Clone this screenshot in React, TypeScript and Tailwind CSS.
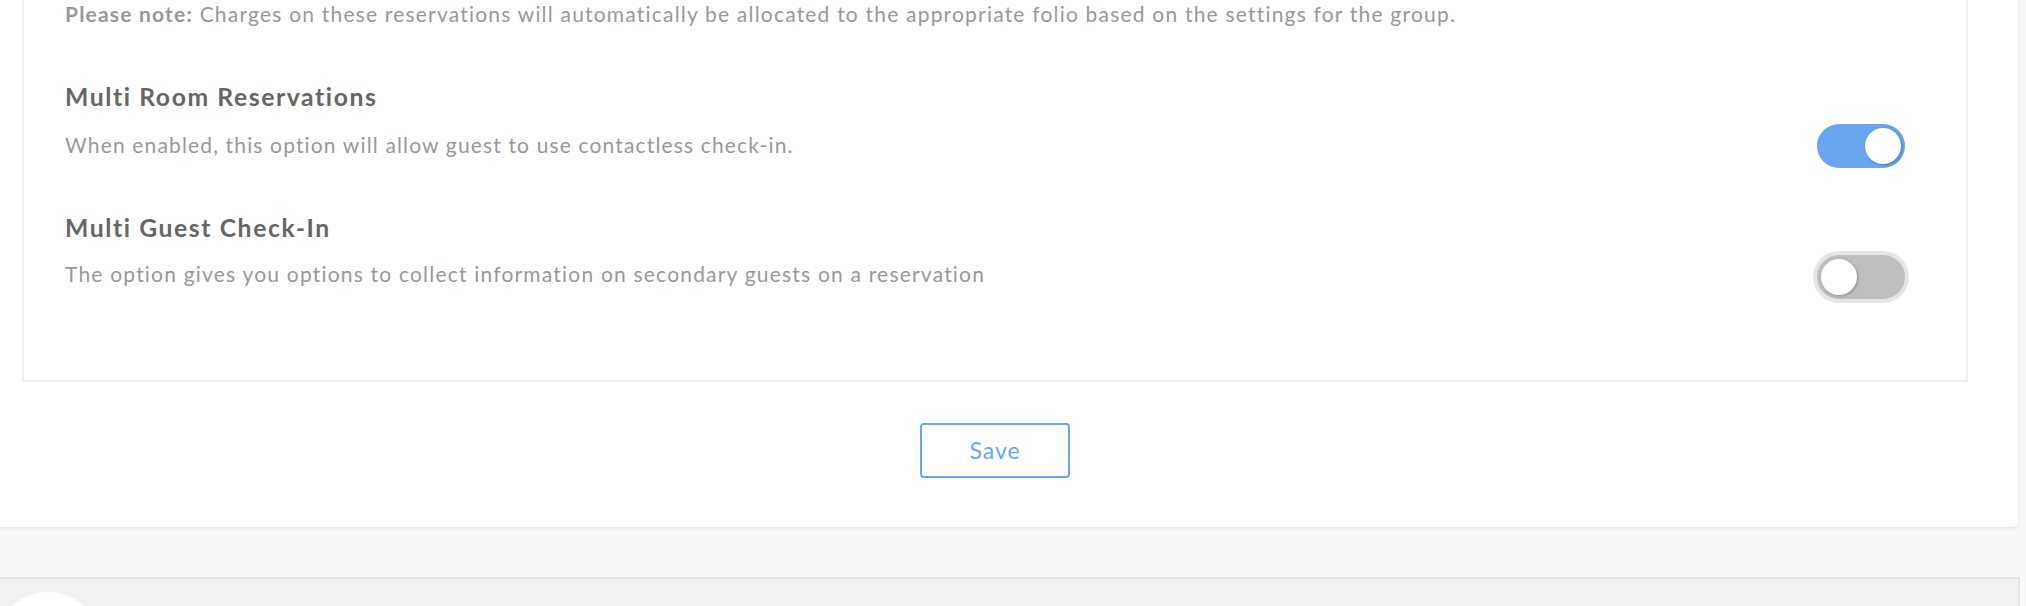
import React from "react";

function Toggle({ on }: { on: boolean }) {
  return (
    <div
      className={
        on
          ? "flex h-[44px] w-[88px] shrink-0 items-center justify-end rounded-full bg-[#68a6ef] px-[4px]"
          : "flex h-[44px] w-[88px] shrink-0 items-center justify-start rounded-full bg-[#bfbfbf] px-[4px] shadow-[0_0_0_4px_#e6e6e6]"
      }
    >
      <div className="h-[36px] w-[36px] rounded-full bg-white shadow-[1px_1px_3px_rgba(0,0,0,0.25)]" />
    </div>
  );
}

export default function App() {
  return (
    <div className="h-[606px] w-[2026px] overflow-hidden bg-[#f8f8f8] font-[Lato,sans-serif] [font-variant-ligatures:none]">
      <div className="w-[2018px] rounded-br-md bg-white pb-[49px] shadow-[0_2px_4px_rgba(0,0,0,0.07)]">
        <div className="ml-[22px] mr-[50px]">
          <div className="border-2 border-t-0 border-[#efefef] pb-[81px] pl-[41px] pr-[61px]">
            <p className="pt-[2px] text-[21px] leading-[24px] tracking-[1.2px] text-[#999999]">
              <span className="font-bold">Please note:</span> Charges on these reservations will automatically be allocated to the appropriate folio based on the settings for the group.
            </p>

            <div className="mt-[56px] flex items-start justify-between">
              <div>
                <h3 className="text-[24.7px] font-bold leading-[29px] tracking-[1.6px] text-[#666666]">Multi Room Reservations</h3>
                <p className="mt-[22px] text-[21px] leading-[24px] tracking-[1.15px] text-[#999999]">
                  When enabled, this option will allow guest to use contactless check-in.
                </p>
              </div>
              <div className="mt-[42px]">
                <Toggle on={true} />
              </div>
            </div>

            <div className="mt-[45px] flex items-start justify-between">
              <div>
                <h3 className="text-[24.7px] font-bold leading-[29px] tracking-[1.6px] text-[#666666]">Multi Guest Check-In</h3>
                <p className="mt-[20px] text-[21px] leading-[24px] tracking-[1.2px] text-[#999999]">
                  The option gives you options to collect information on secondary guests on a reservation
                </p>
              </div>
              <div className="mt-[42px]">
                <Toggle on={false} />
              </div>
            </div>
          </div>

          <div className="mt-[41px] flex justify-center">
            <button className="h-[55px] w-[150px] rounded-[4px] border-2 border-[#6aa7ee] bg-white text-[23px] tracking-[1px] text-[#6aa7ee]">
              Save
            </button>
          </div>
        </div>
      </div>

      <div className="mt-[50px] h-[200px] w-[2020px] border-r-2 border-t-2 border-[#e4e4e4] bg-[#f1f1f1] pt-[13px]">
        <div className="ml-[-7px] h-[110px] w-[110px] rounded-full bg-white" />
      </div>
    </div>
  );
}
